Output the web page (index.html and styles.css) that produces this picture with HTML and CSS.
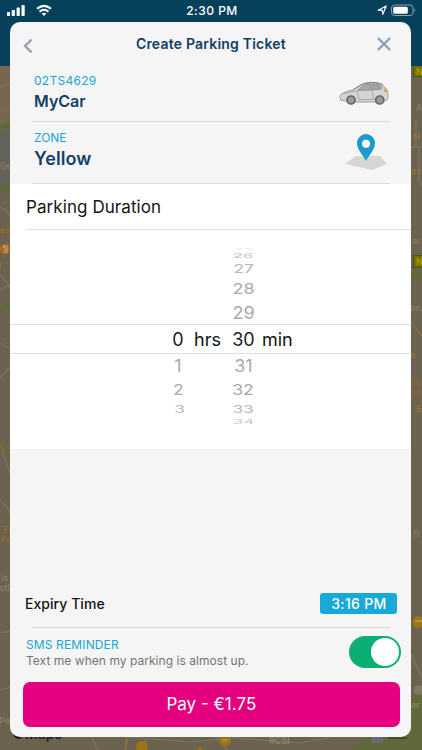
FILE: index.html
```html
<!DOCTYPE html>
<html lang="en">
<head>
<meta charset="utf-8">
<title>Create Parking Ticket</title>
<link rel="stylesheet" href="styles.css">
</head>
<body>
<div class="screen">
  <svg class="map" viewBox="0 0 422 750" aria-hidden="true">
    <rect width="422" height="750" fill="#6c6250"/>
    <rect y="66" width="12" height="120" fill="#786650"/>
    <path d="M0 132L12 128V187L0 190Z" fill="#62635b"/>
    <path d="M0 125L12 121V127L0 131ZM0 187L12 184V190L0 192ZM0 307L12 301V307L0 313ZM410 271h12v8h-12ZM350 750L422 690V750Z" fill="#61693a"/>
    <g fill="none" stroke="#81745f" stroke-width="1.2">
      <path d="M0 88L12 82M0 112L12 109M0 207Q7 210 12 218M0 275Q9 283 12 294M0 290L12 283M0 343L12 350M0 378L12 365M0 444L12 479M0 500Q10 508 12 520M0 633L12 631M0 690L12 687"/>
      <path d="M416 120V147M419 147V180L422 186M410 147H422M410 652L422 678M90 735L98 750M115 736L190 742L235 738L300 743L342 735M126 737V750M146 737V750M215 737L228 750"/>
    </g>
    <path d="M128 735Q128 744 124 750M410 321L422 336" stroke="#957631" fill="none"/>
    <g font-family="Inter, sans-serif" font-size="9" font-weight="600">
      <text x="0" y="169" fill="#91755b">Gr</text>
      <text x="0" y="233" fill="#98702c">es</text>
      <text x="-1" y="268" fill="#98702c">r</text>
      <text x="0" y="451" fill="#806929">Du</text>
      <text x="3" y="533" fill="#8b7027">Fi</text>
      <text x="1" y="543" fill="#8b7027">Fa</text>
      <text x="1" y="581" fill="#8a7d69">Is</text>
      <text x="-1" y="591" fill="#8a7d69">stle</text>
      <text x="-1" y="724" fill="#8a7d69">Pet</text>
      <text x="416" y="111" fill="#857766">A</text>
      <text x="413" y="140" fill="#9a7330">H</text>
      <text x="411" y="174" fill="#9a7330">es</text>
      <text x="412" y="244" fill="#857766">ar</text>
      <text x="410" y="311" fill="#857766">on</text>
      <text x="410" y="358" fill="#9a7330">o</text>
      <text x="410" y="385" fill="#936328">ec</text>
      <text x="410" y="395" fill="#936328">ec</text>
      <text x="416" y="412" fill="#9a7330">E</text>
      <text x="413" y="537" fill="#7d725e">ft</text>
      <text x="411" y="708" fill="#8a7d69">er</text>
      <text x="269" y="744" fill="#91836d">RCSI</text>
      <text x="12" y="739" fill="#24211b" font-size="14">&#9679;Maps</text>
    </g>
    <g fill="#9b7415">
      <circle cx="5" cy="249" r="5.5" fill="#a06929"/>
      <circle cx="142" cy="747" r="6"/>
      <circle cx="225" cy="740" r="6"/>
      <circle cx="418" cy="622" r="6"/>
      <circle cx="200" cy="750" r="2.5"/>
    </g>
    <path d="M3.5 245v3M5 245v8M7 245v8M222 740h6M415 621h7" stroke="#d0aa72" fill="none"/>
    <rect x="371" y="736" width="12" height="7" rx="2" fill="#6a6a7a"/>
    <path d="M388 738H407" stroke="#292820" stroke-width="1"/>
    <circle cx="419" cy="690" r="5" fill="#827763"/>
    <g fill="#776d00" stroke="#4c570f"><rect x="413.500" y="65.500" width="10" height="11"/><rect x="413.500" y="255.500" width="10" height="12"/></g>
    <g fill="#a69a0a" font-family="Inter, sans-serif" font-size="9" font-weight="700"><text x="416" y="75">N</text><text x="416" y="265">N</text></g>
  </svg>

  <header class="status">
    <svg class="signal" viewBox="0 0 40 14" aria-hidden="true">
      <g fill="#fff"><rect y="9" width="3" height="4" rx=".8"/><rect x="4.700" y="7" width="3.200" height="6" rx=".8"/><rect x="9.600" y="4.500" width="3.200" height="8.500" rx=".8"/><rect x="14.500" y="2" width="3.200" height="11" rx=".8"/></g>
      <g fill="none" stroke="#fff" stroke-width="2"><path d="M30 5.600Q37 -.3 44 5.600" transform="translate(0 .2)"/><path d="M32.500 8.600Q37 5 41.500 8.600"/></g>
      <path d="M34.700 10.500Q37 8.900 39.300 10.500L37 13Z" fill="#fff"/>
    </svg>
    <span class="clock">2:30 PM</span>
    <svg class="power" viewBox="0 0 40 14" aria-hidden="true">
      <path d="M1.200 7.200L9.200 3L5.800 11.300L5.200 7.400Z" fill="none" stroke="#fff" stroke-width="1.200" stroke-linejoin="round"/>
      <rect x="14.500" y="2" width="21.500" height="10.500" rx="3" fill="none" stroke="#89a5b0"/>
      <rect x="16.200" y="3.700" width="14.600" height="7.100" rx="1.500" fill="#fff"/>
      <path d="M37.300 5.500Q39.300 7.200 37.300 9Z" fill="#89a5b0"/>
    </svg>
  </header>

  <main class="card">
    <div class="titlebar">
      <svg class="back" viewBox="0 0 10 14" aria-hidden="true"><path d="M7.800 1.300L2 7L7.800 12.700"/></svg>
      <h1>Create Parking Ticket</h1>
      <svg class="close" viewBox="0 0 14 14" aria-hidden="true"><path d="M1.600 1.600L12.400 12.400M12.400 1.600L1.600 12.400"/></svg>
    </div>

    <section class="detail vehicle">
      <div><p class="label plate">02TS4629</p><p class="value">MyCar</p></div>
      <svg class="car" viewBox="0 0 50 25" aria-hidden="true">
        <path d="M1.500 19L1 15.500L2.300 13Q7 9.800 14 9L21 4.500Q25 2 32 1.500Q41 1.400 44 4.300L48.600 9.500L49 17L47.500 19.500L39 21H12Z" fill="#d5d3d3" stroke="#918f91" stroke-width=".8"/>
        <path d="M14 9L21 4.300Q25 1.800 32 1.600Q41 1.400 44 4.300" fill="none" stroke="#707075" stroke-width=".9"/>
        <path d="M18.500 9.500L23.500 5.200Q27 3.200 31.800 3.100L32.300 9Z" fill="#a9a8aa" stroke="#77777b" stroke-width=".6"/>
        <path d="M33 3.100Q40 2.800 42.800 6.200L42 8.200L33.500 9Z" fill="#a4a4a7" stroke="#77777b" stroke-width=".6"/>
        <path d="M18 10L20 18.500H35L32.800 9M4 13Q11 10.500 18 10" fill="none" stroke="#999799" stroke-width=".7"/>
        <path d="M44.800 7.600L47.300 7.900L48.500 11L45 11Z" fill="#e6a34d"/>
        <path d="M2 14L5 14L3.500 17H1.500Z" fill="#e8d3bb"/>
        <g fill="#9b9a9d" stroke="#66666a" stroke-width="1.700"><circle cx="12" cy="19" r="4"/><circle cx="40.700" cy="19" r="4"/></g>
      </svg>
    </section>

    <section class="detail zone">
      <div><p class="label">ZONE</p><p class="value yellow">Yellow</p></div>
      <svg class="pin" viewBox="0 0 44 38" aria-hidden="true">
        <path d="M1 31L12 23H36L43 31L28 37Z" fill="#d8d5d3"/>
        <path d="M22 28C19 22 13 16.500 13 10A9 9 0 0 1 31 10C31 16.500 25 22 22 28Z" fill="#1c9ad0"/>
        <circle cx="22" cy="10.800" r="4" fill="#fff"/>
      </svg>
    </section>

    <section class="duration">
      <h2>Parking Duration</h2>
      <div class="picker">
        <div class="col hours">
          <span class="n gap"></span>
          <span class="n current">0</span>
          <span class="n p1">1</span>
          <span class="n p2">2</span>
          <span class="n p3">3</span>
        </div>
        <div class="unit hrs">hrs</div>
        <div class="col">
          <span class="n m5">25</span>
          <span class="n m4">26</span>
          <span class="n m3">27</span>
          <span class="n m2">28</span>
          <span class="n m1">29</span>
          <span class="n current">30</span>
          <span class="n p1">31</span>
          <span class="n p2">32</span>
          <span class="n p3">33</span>
          <span class="n p4">34</span>
        </div>
        <div class="unit min">min</div>
      </div>
    </section>

    <section class="expiry"><span class="exp-label">Expiry Time</span><span class="badge">3:16 PM</span></section>

    <section class="sms">
      <div><p class="label sms-label">SMS REMINDER</p><p class="note">Text me when my parking is almost up.</p></div>
      <span class="toggle"><span class="knob"></span></span>
    </section>

    <button class="pay">Pay - €1.75</button>
  </main>
</div>
</body>
</html>
```
FILE: styles.css
```css
* { box-sizing: border-box; }
body, h1, h2, p { margin: 0; }
body { font-family: Inter, "Liberation Sans", sans-serif; }

.screen {
  position: relative;
  width: 422px;
  height: 750px;
  overflow: hidden;
  background: #6c6250;
}
.map { position: absolute; left: 0; top: 0; width: 422px; height: 750px; }

.status {
  position: relative;
  display: grid;
  grid-template-columns: 1fr auto 1fr;
  align-items: start;
  height: 66px;
  padding: 3px 5px 0 7px;
  background: #07405b;
  color: #fff;
}
.signal { width: 40px; height: 14px; overflow: visible; }
.power { width: 40px; height: 14px; justify-self: end; }
.clock { font-size: 12px; font-weight: 500; line-height: 16px; letter-spacing: .5px; }

.card {
  position: relative;
  display: flex;
  flex-direction: column;
  width: 401px;
  height: 715px;
  margin: -44px 0 0 10.4px;
  border-radius: 10px;
  background: #f5f5f5;
  overflow: hidden;
}
.titlebar {
  display: grid;
  grid-template-columns: 14px 1fr 14px;
  align-items: center;
  height: 44px;
  padding: 0 20.6px 0 12.6px;
}
.titlebar h1 {
  font-size: 14px;
  font-weight: 600;
  line-height: 20px;
  letter-spacing: .2px;
  text-align: center;
  color: #113e66;
  white-space: nowrap;
  padding-left: 8px;
}
.back { width: 10px; height: 14px; margin-top: 3px; }
.close { width: 14px; height: 14px; }
.back path, .close path { fill: none; stroke: #92a5b7; stroke-width: 2.4; stroke-linecap: round; stroke-linejoin: round; }

.detail {
  display: flex;
  justify-content: space-between;
  margin: 0 21px 0 21.6px;
  padding-left: 2px;
  border-bottom: 1px solid #dcdcdd;
}
.vehicle { height: 56px; padding-top: 7px; }
.zone { height: 62px; padding-top: 8px; }
.label { font-size: 12px; line-height: 16px; color: #20a5d4; white-space: nowrap; }
.plate { letter-spacing: .27px; }
.value { font-size: 16px; font-weight: 600; line-height: 24px; color: #123f68; }
.yellow { font-size: 18px; line-height: 26px; letter-spacing: .1px; }
.car { width: 50px; height: 25px; margin: 8px 1px 0 0; }
.pin { width: 44px; height: 38px; margin: 3px 2px 0 0; }

.duration { height: 265px; background: #fff; }
.duration h2 {
  height: 46px;
  margin-left: 15.6px;
  border-bottom: 1px solid #dfdfe0;
  font-size: 17px;
  font-weight: 400;
  line-height: 46px;
  letter-spacing: .08px;
  color: #151515;
}
.picker {
  display: grid;
  grid-template-columns: 24px 41.5px 24px 1fr;
  height: 219px;
  padding: 17px 0 0 155.6px;
  background:
    linear-gradient(#dedee0, #dedee0) 0 94px / 100% 1px no-repeat,
    linear-gradient(#dedee0, #dedee0) 0 123px / 100% 1px no-repeat;
}
.col { display: flex; flex-direction: column; align-items: center; }
.n { display: flex; flex: none; align-items: center; justify-content: center; height: 24px; font-size: 18px; line-height: 24px; color: #aaa; }
.gap { height: 78px; }
.current { height: 29px; color: #202020; }
.m1 { transform: scaleY(.96); }
.m2 { transform: scaleY(.83); }
.m3 { height: 16px; transform: scale(.96, .64); color: #b5b5b5; }
.m4 { height: 10px; transform: scale(.94, .38); color: #c1c1c1; }
.m5 { height: 4px; transform: scale(.9, .12); color: #e9e9e9; }
.p1 { transform: scaleY(.94); }
.p2 { transform: scale(.98, .83); }
.p3 { height: 14px; transform: scale(.96, .6); color: #bcbcbc; }
.p4 { height: 12px; transform: scale(.94, .36); color: #c9c9c9; }
.hours .p2 { padding-left: 2px; }
.hours .p3 { padding-left: 3px; }
.unit { padding-top: 78px; font-size: 18px; line-height: 29px; color: #111; }
.hrs { padding-left: 4px; }
.min { padding-left: 6.5px; }

.expiry {
  display: flex;
  align-items: center;
  justify-content: space-between;
  height: 44px;
  margin: 132px 14px 0 14.6px;
  color: #151515;
}
.exp-label { font-size: 14px; font-weight: 500; letter-spacing: .05px; }
.badge {
  width: 77px;
  height: 21px;
  border-radius: 3px;
  background: #18a9da;
  color: #fff;
  font-size: 14px;
  font-weight: 500;
  line-height: 21px;
  letter-spacing: .3px;
  text-align: center;
}
.sms {
  display: flex;
  justify-content: space-between;
  height: 57px;
  margin: 1px 10px 0 15.6px;
  padding-top: 11px;
  background: linear-gradient(#dcdcdd, #dcdcdd) 6px 1px / 358px 1px no-repeat;
}
.sms-label { letter-spacing: .13px; }
.note { font-size: 12px; line-height: 15px; letter-spacing: .04px; color: #747474; white-space: nowrap; }
.toggle { display: flex; justify-content: flex-end; width: 52px; height: 32px; margin-top: -1px; padding: 2px; border-radius: 16px; background: #0caf72; }
.knob { width: 28px; height: 28px; border-radius: 50%; background: #fff; }
.pay {
  flex: none;
  width: 377.5px;
  height: 45px;
  margin: -1px 0 0 12.200px;
  padding: 0;
  border: 0;
  border-radius: 7px;
  background: #e4007f;
  color: #fff;
  font: 400 17px/45px Inter, sans-serif;
}
```
